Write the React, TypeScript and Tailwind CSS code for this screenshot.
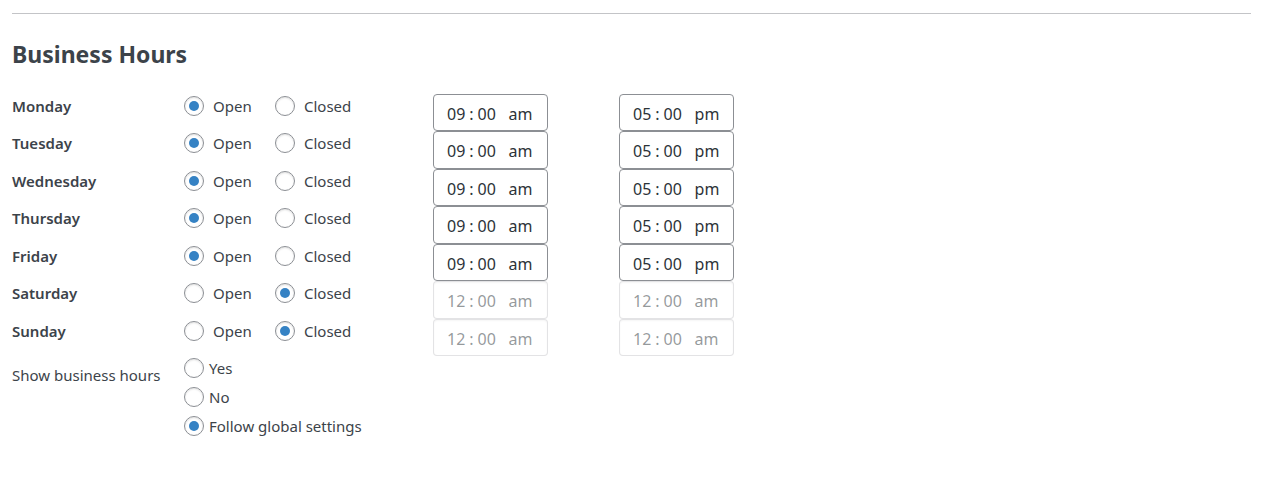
import { useState } from "react";

type Status = "open" | "closed";

interface Day {
  name: string;
  status: Status;
  from: string;
  to: string;
}

const initialDays: Day[] = [
  { name: "Monday", status: "open", from: "09:00", to: "17:00" },
  { name: "Tuesday", status: "open", from: "09:00", to: "17:00" },
  { name: "Wednesday", status: "open", from: "09:00", to: "17:00" },
  { name: "Thursday", status: "open", from: "09:00", to: "17:00" },
  { name: "Friday", status: "open", from: "09:00", to: "17:00" },
  { name: "Saturday", status: "closed", from: "00:00", to: "00:00" },
  { name: "Sunday", status: "closed", from: "00:00", to: "00:00" },
];

const visibilityOptions = ["Yes", "No", "Follow global settings"];

interface RadioProps {
  name: string;
  label: string;
  checked: boolean;
  onSelect: () => void;
  className: string;
}

function Radio({ name, label, checked, onSelect, className }: RadioProps) {
  return (
    <label className={`flex items-center ${className}`}>
      <input
        type="radio"
        name={name}
        checked={checked}
        onChange={onSelect}
        className="grid size-5 shrink-0 appearance-none place-items-center rounded-full border border-[#8c8f94] bg-white shadow-[inset_0_1px_2px_rgba(0,0,0,0.12)] checked:before:size-[10px] checked:before:rounded-full checked:before:bg-[#3582c4]"
      />
      {label}
    </label>
  );
}

interface TimeFieldProps {
  label: string;
  value: string;
  disabled: boolean;
  onChange: (value: string) => void;
}

function TimeField({ label, value, disabled, onChange }: TimeFieldProps) {
  return (
    <input
      type="time"
      aria-label={label}
      value={value}
      disabled={disabled}
      onChange={(event) => onChange(event.target.value)}
      className="block h-[37px] w-[115px] rounded border border-[#8c8f94] bg-white px-3 pt-[2px] text-base text-[#2c3338] group-even:h-[38px] disabled:border-[#dcdcde]/80 disabled:text-[#2c3338]/50 disabled:shadow-[inset_0_1px_2px_rgba(0,0,0,0.04)] [&::-webkit-calendar-picker-indicator]:hidden [&::-webkit-datetime-edit-ampm-field]:ml-2 [&::-webkit-datetime-edit-ampm-field]:lowercase [&::-webkit-datetime-edit-hour-field]:mr-[3px] [&::-webkit-datetime-edit-minute-field]:ml-[3px]"
    />
  );
}

export default function App() {
  const [days, setDays] = useState(initialDays);
  const [visibility, setVisibility] = useState("Follow global settings");

  const update = (name: string, change: Partial<Day>) =>
    setDays((current) => current.map((day) => (day.name === name ? { ...day, ...change } : day)));

  return (
    <main className="bg-white pt-[13px] pr-[10px] pb-10 pl-3 font-['Segoe_UI','Noto_Sans',sans-serif] text-[15px] leading-6 text-[#3c434a]">
      <hr className="border-[#c3c4c7]" />
      <h2 className="mt-6 mb-6 text-[23px] leading-8 font-bold">Business Hours</h2>
      <table className="border-collapse text-left">
        <tbody>
          {days.map((day) => (
            <tr key={day.name} className="group align-top">
              <th scope="row" className="w-[172px] p-0 font-semibold">
                {day.name}
              </th>
              <td className="w-[249px] p-0">
                <div className="flex">
                  <Radio
                    name={day.name}
                    label="Open"
                    checked={day.status === "open"}
                    onSelect={() => update(day.name, { status: "open" })}
                    className="w-[91px] gap-[9px]"
                  />
                  <Radio
                    name={day.name}
                    label="Closed"
                    checked={day.status === "closed"}
                    onSelect={() => update(day.name, { status: "closed" })}
                    className="gap-[9px]"
                  />
                </div>
              </td>
              <td className="w-[186px] p-0">
                <TimeField
                  label={`${day.name} opening time`}
                  value={day.from}
                  disabled={day.status === "closed"}
                  onChange={(from) => update(day.name, { from })}
                />
              </td>
              <td className="p-0">
                <TimeField
                  label={`${day.name} closing time`}
                  value={day.to}
                  disabled={day.status === "closed"}
                  onChange={(to) => update(day.name, { to })}
                />
              </td>
            </tr>
          ))}
          <tr className="align-top">
            <th scope="row" id="visibility-label" className="w-[172px] p-0 pt-[7px] font-normal">
              Show business hours
            </th>
            <td colSpan={3} className="p-0">
              <div role="radiogroup" aria-labelledby="visibility-label" className="flex flex-col items-start gap-[5px]">
                {visibilityOptions.map((option) => (
                  <Radio
                    key={option}
                    name="visibility"
                    label={option}
                    checked={visibility === option}
                    onSelect={() => setVisibility(option)}
                    className="gap-[5px]"
                  />
                ))}
              </div>
            </td>
          </tr>
        </tbody>
      </table>
    </main>
  );
}
